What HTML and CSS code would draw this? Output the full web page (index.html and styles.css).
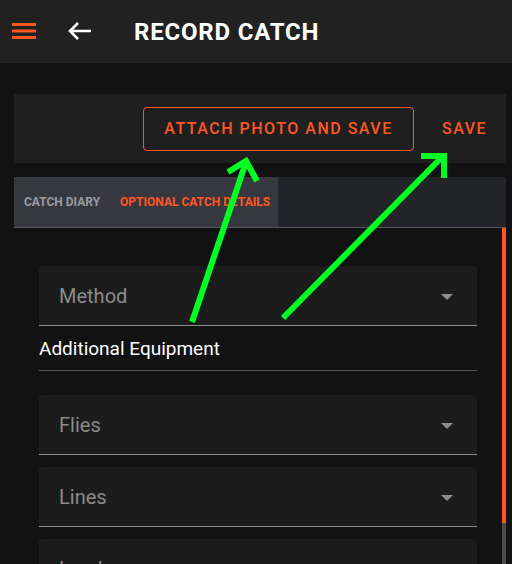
FILE: index.html
```html
<!DOCTYPE html>
<html lang="en">
<head>
    <meta charset="UTF-8">
    <meta name="viewport" content="width=device-width, initial-scale=1.0">
    <title>Record Catch</title>
    <link rel="stylesheet" href="styles.css">
</head>
<body>
    <header class="toolbar">
        <svg class="menu-icon" width="24" height="16" viewBox="0 0 24 16">
            <rect x="0" y="0" width="24" height="3" fill="#ff5722"/>
            <rect x="0" y="6.5" width="24" height="3" fill="#ff5722"/>
            <rect x="0" y="13" width="24" height="3" fill="#ff5722"/>
        </svg>
        <svg class="back-icon" width="24" height="18" viewBox="0 0 24 18">
            <path d="M2 9H23M10 1L2 9L10 17" fill="none" stroke="#fff" stroke-width="2.6"/>
        </svg>
        <h1 class="title">RECORD CATCH</h1>
    </header>

    <main class="page">
        <div class="actions">
            <button class="btn btn-outline">ATTACH PHOTO AND SAVE</button>
            <button class="btn btn-text">SAVE</button>
        </div>

        <nav class="tabs">
            <div class="tab">CATCH DIARY</div>
            <div class="tab active">OPTIONAL CATCH DETAILS</div>
        </nav>

        <section class="details">
            <div class="form">
                <div class="select">
                    <span class="select-label">Method</span>
                    <span class="caret"></span>
                </div>
                <div class="group-title">Additional Equipment</div>
                <div class="select">
                    <span class="select-label">Flies</span>
                    <span class="caret"></span>
                </div>
                <div class="select">
                    <span class="select-label">Lines</span>
                    <span class="caret"></span>
                </div>
                <div class="select">
                    <span class="select-label">Leaders</span>
                    <span class="caret"></span>
                </div>
            </div>
            <div class="scrollbar">
                <div class="thumb"></div>
            </div>
        </section>
    </main>

    <!-- green annotation arrows -->
    <svg class="annotations" width="512" height="564" viewBox="0 0 512 564">
        <g fill="none" stroke="#00ff22" stroke-width="6">
            <path d="M192 322L246 162"/>
            <path d="M228 172L246 161L257 181"/>
            <path d="M283 318L442 157"/>
            <path d="M421 156L444 156L444 178"/>
        </g>
    </svg>
</body>
</html>
```

FILE: styles.css
```css
body {
    margin: 0;
    background-color: #121212;
    font-family: Roboto, "Noto Sans", Arial, sans-serif;
    color: #fff;
    height: 564px;
    overflow: hidden;
}

.toolbar {
    height: 63px;
    background-color: #212121;
    display: flex;
    align-items: center;
    padding-left: 12px;
}

.menu-icon {
    margin-top: -1px;
}

.back-icon {
    margin-left: 32px;
    margin-top: -1px;
}

.title {
    margin: 0 0 0 42px;
    font-size: 24px;
    font-weight: 700;
    letter-spacing: 0.8px;
}

.page {
    padding: 31px 6px 0 14px;
}

.actions {
    height: 69px;
    background-color: #1f1f1f;
    display: flex;
    align-items: center;
    justify-content: flex-end;
}

.btn {
    font-family: inherit;
    font-size: 16px;
    font-weight: 500;
    letter-spacing: 1.5px;
    color: #ff5722;
    background: none;
    cursor: pointer;
    height: 44px;
    padding: 0 20px;
}

.btn-outline {
    border: 1px solid #ff5722;
    border-radius: 4px;
    width: 271px;
}

.btn-text {
    border: none;
    margin-left: 8px;
    padding-right: 19px;
}

.tabs {
    margin-top: 14px;
    height: 50px;
    background-color: #232428;
    border-bottom: 1px solid #55565c;
    display: flex;
}

.tab {
    display: flex;
    align-items: center;
    padding: 0 10px;
    font-size: 12px;
    font-weight: 700;
    color: #9a9ca4;
    background-color: #37373f;
}

.tab.active {
    color: #ff5722;
    padding-right: 8px;
}

.details {
    display: flex;
}

.form {
    flex: 1;
    padding: 38px 25px 0 25px;
}

.select {
    height: 59px;
    background-color: #1c1c1c;
    border-radius: 4px 4px 0 0;
    border-bottom: 1px solid #8c8c8c;
    display: flex;
    align-items: center;
    justify-content: space-between;
    padding: 0 24px 0 20px;
    margin-bottom: 12px;
}

.select-label {
    font-size: 20px;
    color: #8b8b8b;
}

.caret {
    width: 0;
    height: 0;
    border-left: 6px solid transparent;
    border-right: 6px solid transparent;
    border-top: 6px solid #8e8e8e;
    margin-top: 2px;
}

.group-title {
    height: 44px;
    border-bottom: 1px solid #55565c;
    display: flex;
    align-items: center;
    font-size: 19px;
    margin-top: -12px;
    margin-bottom: 24px;
}

.scrollbar {
    width: 4px;
    height: 340px;
    background-color: #4a4a4a;
}

.thumb {
    height: 295px;
    background-color: #ff5722;
}

.annotations {
    position: absolute;
    left: 0;
    top: 0;
    pointer-events: none;
}
```
